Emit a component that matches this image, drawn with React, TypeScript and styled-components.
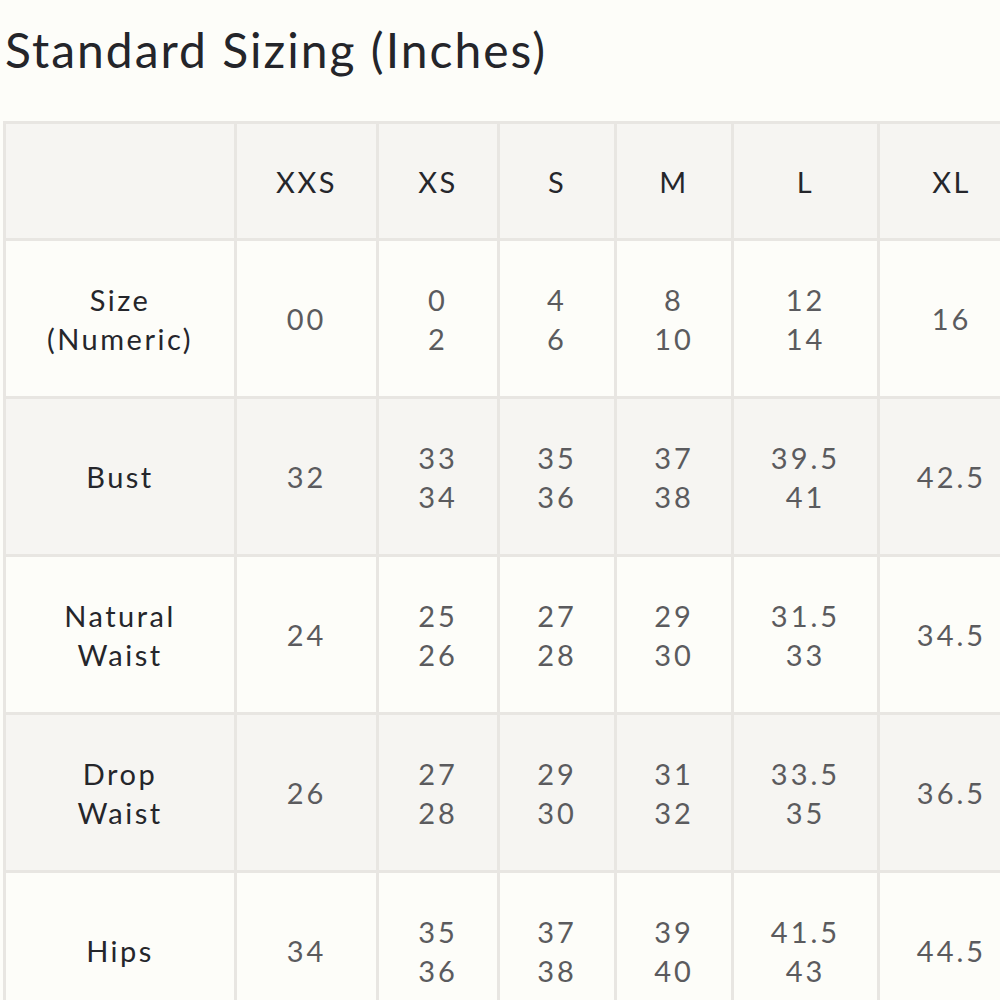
import React from "react";
import styled, { createGlobalStyle } from "styled-components";

const Global = createGlobalStyle`
  html, body { margin: 0; padding: 0; background: #fdfdf9; overflow: hidden; }
  body { font-family: Lato, "Noto Sans", sans-serif; }
`;

const Page = styled.div`
  width: 1000px;
  height: 1000px;
  overflow: hidden;
  background: #fdfdf9;
  padding: 0 0 0 3px;
  box-sizing: border-box;
`;

const Title = styled.h1`
  margin: 0;
  padding: 21px 0 0 2px;
  height: 121px;
  box-sizing: border-box;
  font-family: Lato, "Noto Sans", sans-serif;
  font-weight: 400;
  font-size: 48px;
  line-height: 58px;
  letter-spacing: 2px;
  color: #24252a;
`;

const Table = styled.table`
  border-collapse: separate;
  border-spacing: 0;
  table-layout: fixed;
  width: 1020px;
  border-top: 3px solid #e8e6e2;
  border-left: 3px solid #e8e6e2;
`;

const Row = styled.tr<{ $shade: boolean; $h: number }>`
  height: ${(p) => p.$h}px;
  background: ${(p) => (p.$shade ? "#f6f5f2" : "#fdfdf9")};
`;

const Cell = styled.td<{ $label?: boolean }>`
  border-right: 3px solid #e8e6e2;
  border-bottom: 3px solid #e8e6e2;
  padding: 0;
  text-align: center;
  vertical-align: middle;
  font-family: Lato, "Noto Sans", sans-serif;
  font-size: 29px;
  line-height: 39px;
  letter-spacing: ${(p) => (p.$label ? "2.5px" : "3px")};
  color: ${(p) => (p.$label ? "#25262b" : "#5b5b5e")};
  font-weight: 400;
`;

const widths = [231, 142, 121, 117, 117, 146, 146];

const header = ["", "XXS", "XS", "S", "M", "L", "XL"];

const rows: { label: string[]; values: string[][] }[] = [
  { label: ["Size", "(Numeric)"], values: [["00"], ["0", "2"], ["4", "6"], ["8", "10"], ["12", "14"], ["16"]] },
  { label: ["Bust"], values: [["32"], ["33", "34"], ["35", "36"], ["37", "38"], ["39.5", "41"], ["42.5"]] },
  { label: ["Natural", "Waist"], values: [["24"], ["25", "26"], ["27", "28"], ["29", "30"], ["31.5", "33"], ["34.5"]] },
  { label: ["Drop", "Waist"], values: [["26"], ["27", "28"], ["29", "30"], ["31", "32"], ["33.5", "35"], ["36.5"]] },
  { label: ["Hips"], values: [["34"], ["35", "36"], ["37", "38"], ["39", "40"], ["41.5", "43"], ["44.5"]] },
];

const Lines = ({ lines }: { lines: string[] }) => (
  <>
    {lines.map((l, i) => (
      <React.Fragment key={i}>
        {i > 0 && <br />}
        {l}
      </React.Fragment>
    ))}
  </>
);

export default function App() {
  return (
    <Page>
      <Global />
      <Title>Standard Sizing (Inches)</Title>
      <Table>
        <colgroup>
          {widths.map((w, i) => (
            <col key={i} style={{ width: w }} />
          ))}
        </colgroup>
        <tbody>
          <Row $shade $h={117}>
            {header.map((h, i) => (
              <Cell key={i} $label>
                {h}
              </Cell>
            ))}
          </Row>
          {rows.map((r, ri) => (
            <Row key={ri} $shade={ri % 2 === 1} $h={158}>
              <Cell $label>
                <Lines lines={r.label} />
              </Cell>
              {r.values.map((v, vi) => (
                <Cell key={vi}>
                  <Lines lines={v} />
                </Cell>
              ))}
            </Row>
          ))}
        </tbody>
      </Table>
    </Page>
  );
}
